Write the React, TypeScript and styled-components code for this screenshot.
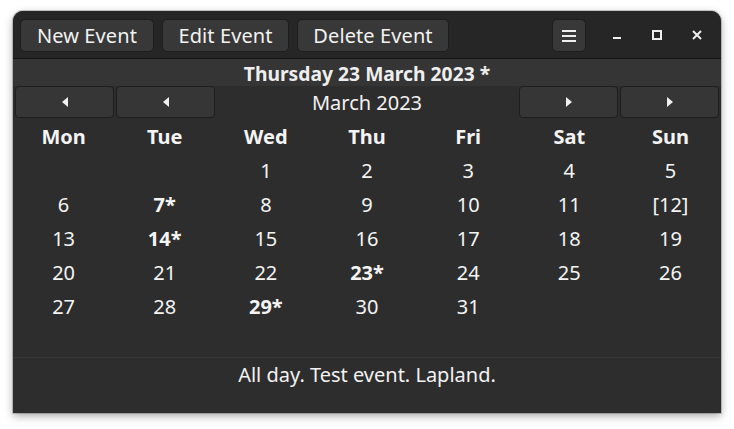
import React from "react";
import styled, { createGlobalStyle } from "styled-components";

const Global = createGlobalStyle`
  html, body { margin: 0; padding: 0; background: #ffffff; }
  body { font-family: "Noto Sans", "Open Sans", sans-serif; }
  #root { width: 734px; height: 429px; }
`;

const Page = styled.div`
  width: 734px;
  height: 429px;
  box-sizing: border-box;
  padding: 11px 13px 16px 13px;
  display: flex;
`;

const Window = styled.div`
  flex: 1;
  display: flex;
  flex-direction: column;
  background: #2d2d2d;
  border-radius: 10px 10px 0 0;
  overflow: hidden;
  box-shadow: 0 0 0 1px rgba(0, 0, 0, 0.18), 0 3px 9px rgba(0, 0, 0, 0.35);
  color: #ffffff;
`;

const HeaderBar = styled.div`
  height: 48px;
  box-sizing: border-box;
  padding: 8px 4px 7px 7px;
  display: flex;
  align-items: center;
  gap: 8px;
  background: #262626;
  border-bottom: 1px solid #141414;
`;

const ToolButton = styled.button<{ $w?: number }>`
  height: 33px;
  box-sizing: border-box;
  padding: 1px 0 0 0;
  width: ${(p) => (p.$w ? `${p.$w}px` : "auto")};
  display: flex;
  align-items: center;
  justify-content: center;
  background: #383838;
  border: 1px solid #1e1e1e;
  border-radius: 5px;
  color: #f2f2f2;
  font-family: "Noto Sans", sans-serif;
  font-size: 20px;
  letter-spacing: 0.1px;
  line-height: 1;
`;

const Spacer = styled.div`
  flex: 1;
`;

const WinControls = styled.div`
  display: flex;
  align-items: center;
  margin-left: 3px;
`;

const WinButton = styled.div`
  width: 40px;
  height: 33px;
  display: flex;
  align-items: center;
  justify-content: center;
`;

const DateLabel = styled.div`
  height: 27px;
  padding-top: 1px;
  box-sizing: border-box;
  background: #353535;
  display: flex;
  align-items: center;
  justify-content: center;
  font-weight: 700;
  font-size: 19.3px;
  color: #eeeeee;
`;

const NavRow = styled.div`
  height: 33px;
  box-sizing: border-box;
  padding: 0 2px 1px 2px;
  display: grid;
  grid-template-columns: 99px 99px 1fr 99px 99px;
  column-gap: 2px;
`;

const NavButton = styled.button`
  box-sizing: border-box;
  background: #363636;
  border: 1px solid #1e1e1e;
  border-radius: 4px;
  display: flex;
  align-items: center;
  justify-content: center;
  padding: 0;
`;

const MonthLabel = styled.div`
  display: flex;
  align-items: center;
  justify-content: center;
  padding-top: 1px;
  font-size: 20px;
  color: #f2f2f2;
`;

const Grid = styled.div`
  display: grid;
  grid-template-columns: repeat(7, 1fr);
  grid-auto-rows: 34px;
`;

const Cell = styled.div<{ $head?: boolean; $bold?: boolean }>`
  display: flex;
  align-items: center;
  justify-content: center;
  font-size: 20px;
  font-weight: ${(p) => (p.$head || p.$bold ? 700 : 400)};
  color: #f4f4f4;
`;

const Footer = styled.div`
  flex: 1;
  border-top: 1px solid #383838;
  display: flex;
  justify-content: center;
  padding-top: 5px;
  font-size: 20px;
  line-height: 24px;
  color: #f2f2f2;
`;

const Tri = ({ dir }: { dir: "left" | "right" }) => (
  <svg width="6" height="10" viewBox="0 0 6 10">
    {dir === "left" ? (
      <polygon points="6,0 6,10 0,5" fill="#f0f0f0" />
    ) : (
      <polygon points="0,0 0,10 6,5" fill="#f0f0f0" />
    )}
  </svg>
);

const days = ["Mon", "Tue", "Wed", "Thu", "Fri", "Sat", "Sun"];
const cells: { t: string; b?: boolean }[] = [
  { t: "" }, { t: "" }, { t: "1" }, { t: "2" }, { t: "3" }, { t: "4" }, { t: "5" },
  { t: "6" }, { t: "7*", b: true }, { t: "8" }, { t: "9" }, { t: "10" }, { t: "11" }, { t: "[12]" },
  { t: "13" }, { t: "14*", b: true }, { t: "15" }, { t: "16" }, { t: "17" }, { t: "18" }, { t: "19" },
  { t: "20" }, { t: "21" }, { t: "22" }, { t: "23*", b: true }, { t: "24" }, { t: "25" }, { t: "26" },
  { t: "27" }, { t: "28" }, { t: "29*", b: true }, { t: "30" }, { t: "31" }, { t: "" }, { t: "" },
  { t: "" }, { t: "" }, { t: "" }, { t: "" }, { t: "" }, { t: "" }, { t: "" },
];

export default function App() {
  return (
    <>
      <Global />
      <Page>
        <Window>
          <HeaderBar>
            <ToolButton $w={134}>New Event</ToolButton>
            <ToolButton $w={127}>Edit Event</ToolButton>
            <ToolButton $w={152}>Delete Event</ToolButton>
            <Spacer />
            <ToolButton $w={34}>
              <svg width="16" height="14" viewBox="0 0 16 14">
                <rect x="1" y="1" width="14" height="2" fill="#eeeeee" />
                <rect x="1" y="6" width="14" height="2" fill="#eeeeee" />
                <rect x="1" y="11" width="14" height="2" fill="#eeeeee" />
              </svg>
            </ToolButton>
            <WinControls>
              <WinButton>
                <svg width="10" height="10" viewBox="0 0 10 10">
                  <rect x="1" y="7" width="8" height="2" fill="#eeeeee" />
                </svg>
              </WinButton>
              <WinButton>
                <svg width="10" height="10" viewBox="0 0 10 10">
                  <rect x="1" y="1" width="8" height="8" fill="none" stroke="#eeeeee" strokeWidth="2" />
                </svg>
              </WinButton>
              <WinButton>
                <svg width="10" height="10" viewBox="0 0 10 10">
                  <path d="M1 1 L9 9 M9 1 L1 9" stroke="#eeeeee" strokeWidth="2" />
                </svg>
              </WinButton>
            </WinControls>
          </HeaderBar>
          <DateLabel>Thursday 23 March 2023 *</DateLabel>
          <NavRow>
            <NavButton><Tri dir="left" /></NavButton>
            <NavButton><Tri dir="left" /></NavButton>
            <MonthLabel>March 2023</MonthLabel>
            <NavButton><Tri dir="right" /></NavButton>
            <NavButton><Tri dir="right" /></NavButton>
          </NavRow>
          <Grid>
            {days.map((d) => (
              <Cell key={d} $head>{d}</Cell>
            ))}
            {cells.map((c, i) => (
              <Cell key={i} $bold={c.b}>{c.t}</Cell>
            ))}
          </Grid>
          <Footer>All day. Test event. Lapland.</Footer>
        </Window>
      </Page>
    </>
  );
}
